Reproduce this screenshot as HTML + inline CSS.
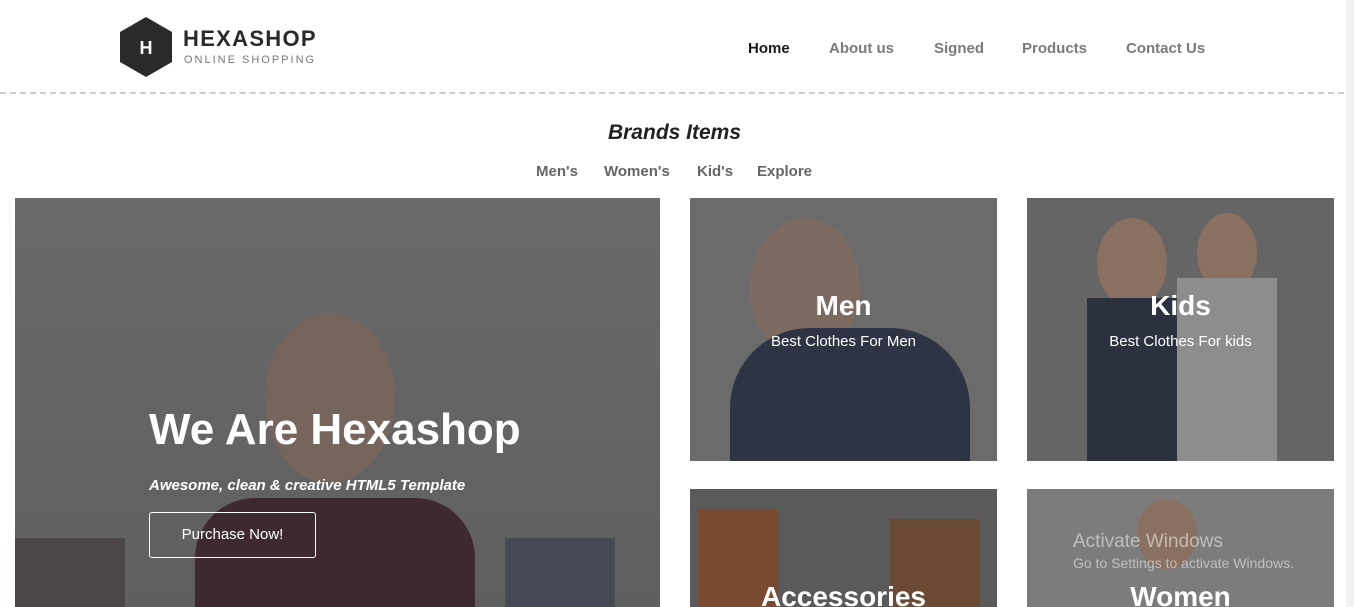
<!DOCTYPE html>
<html><head><meta charset="utf-8"><style>
*{margin:0;padding:0;box-sizing:border-box}
body{width:1354px;height:607px;overflow:hidden;background:#fff;font-family:"Liberation Sans",sans-serif;position:relative}
.hdr{position:absolute;left:0;top:0;width:1354px;height:94px;border-bottom:2px dashed #ccc}
.logo{position:absolute;left:120px;top:17px}
.brand{position:absolute;left:183px;top:26px;font-size:22px;font-weight:bold;letter-spacing:1.3px;color:#2a2a2a}
.sub{position:absolute;left:184px;top:54px;font-size:11px;letter-spacing:2px;color:#777}
.nav{position:absolute;top:40px;font-size:15px;font-weight:bold;color:#7a7a7a}
h2{position:absolute;left:0;width:1349px;text-align:center;top:121px;font-size:21px;font-style:italic;font-weight:bold;color:#222}
.tabs{position:absolute;top:163px;font-size:15px;font-weight:bold;color:#666}
.box{position:absolute;overflow:hidden}
.t{position:absolute;left:0;width:100%;text-align:center;color:#fff}
</style></head><body>
<div class="hdr">
<svg class="logo" width="52" height="60" viewBox="0 0 52 60"><polygon points="26,0 52,15 52,45 26,60 0,45 0,15" fill="#2a2a2a"/><text x="26" y="37" text-anchor="middle" fill="#fff" font-size="18" font-weight="bold" font-family="Liberation Sans">H</text></svg>
<div class="brand">HEXASHOP</div><div class="sub">ONLINE SHOPPING</div>
<div class="nav" style="left:748px;color:#1a1a1a">Home</div>
<div class="nav" style="left:829px">About us</div>
<div class="nav" style="left:934px">Signed</div>
<div class="nav" style="left:1022px">Products</div>
<div class="nav" style="left:1126px">Contact Us</div>
</div>
<div style="position:absolute;left:1346px;top:0;width:8px;height:607px;background:#f1f1f1"></div>
<h2>Brands Items</h2>
<div class="tabs" style="left:536px">Men's</div>
<div class="tabs" style="left:604px">Women's</div>
<div class="tabs" style="left:697px">Kid's</div>
<div class="tabs" style="left:757px">Explore</div>

<div class="box" style="left:15px;top:198px;width:645px;height:409px;background:linear-gradient(#6a6a6a,#5f5f5f)">
<div style="position:absolute;left:250px;top:115px;width:130px;height:170px;border-radius:50%;background:#76655c"></div>
<div style="position:absolute;left:180px;top:300px;width:280px;height:120px;background:#3e2a2e;border-radius:60px 60px 0 0"></div>
<div style="position:absolute;left:0;top:340px;width:110px;height:70px;background:#4c4646"></div>
<div style="position:absolute;left:490px;top:340px;width:110px;height:70px;background:#454a55"></div>
<div style="position:absolute;left:134px;top:207px;color:#fff;font-size:44px;font-weight:bold">We Are Hexashop</div>
<div style="position:absolute;left:134px;top:279px;color:#fff;font-size:15px;font-weight:bold;font-style:italic">Awesome, clean &amp; creative HTML5 Template</div>
<div style="position:absolute;left:134px;top:314px;width:167px;height:46px;border:1px solid #fff;border-radius:3px;color:#fff;font-size:15px;text-align:center;line-height:44px">Purchase Now!</div>
</div>

<div class="box" style="left:690px;top:198px;width:307px;height:263px;background:#6b6b6b">
<div style="position:absolute;left:60px;top:20px;width:110px;height:140px;border-radius:50%;background:#7d6a60"></div>
<div style="position:absolute;left:40px;top:130px;width:240px;height:140px;background:#2e3444;border-radius:80px 80px 0 0"></div>
<div class="t" style="top:92px;font-size:28px;font-weight:bold">Men</div>
<div class="t" style="top:135px;font-size:15px">Best Clothes For Men</div></div>
<div class="box" style="left:1027px;top:198px;width:307px;height:263px;background:#656565">
<div style="position:absolute;left:70px;top:20px;width:70px;height:90px;border-radius:50%;background:#8a7060"></div>
<div style="position:absolute;left:170px;top:15px;width:60px;height:80px;border-radius:50%;background:#8a7060"></div>
<div style="position:absolute;left:60px;top:100px;width:90px;height:163px;background:#2c3140"></div>
<div style="position:absolute;left:150px;top:80px;width:100px;height:183px;background:#8d8d8d"></div>
<div class="t" style="top:92px;font-size:28px;font-weight:bold">Kids</div>
<div class="t" style="top:135px;font-size:15px">Best Clothes For kids</div></div>
<div class="box" style="left:690px;top:489px;width:307px;height:118px;background:#5a5a5a">
<div style="position:absolute;left:8px;top:20px;width:80px;height:100px;background:#7a4a30"></div>
<div style="position:absolute;left:200px;top:30px;width:90px;height:90px;background:#6a4a35"></div>
<div class="t" style="top:92px;font-size:28px;font-weight:bold">Accessories</div></div>
<div class="box" style="left:1027px;top:489px;width:307px;height:118px;background:#7c7c7c">
<div style="position:absolute;left:110px;top:10px;width:60px;height:70px;border-radius:50%;background:#8a7060"></div>
<div class="t" style="top:92px;font-size:28px;font-weight:bold">Women</div>
<div style="position:absolute;left:46px;top:42px;color:rgba(255,255,255,.5);font-size:19px">Activate Windows</div>
<div style="position:absolute;left:46px;top:66px;color:rgba(255,255,255,.5);font-size:14px">Go to Settings to activate Windows.</div></div>
</body></html>
